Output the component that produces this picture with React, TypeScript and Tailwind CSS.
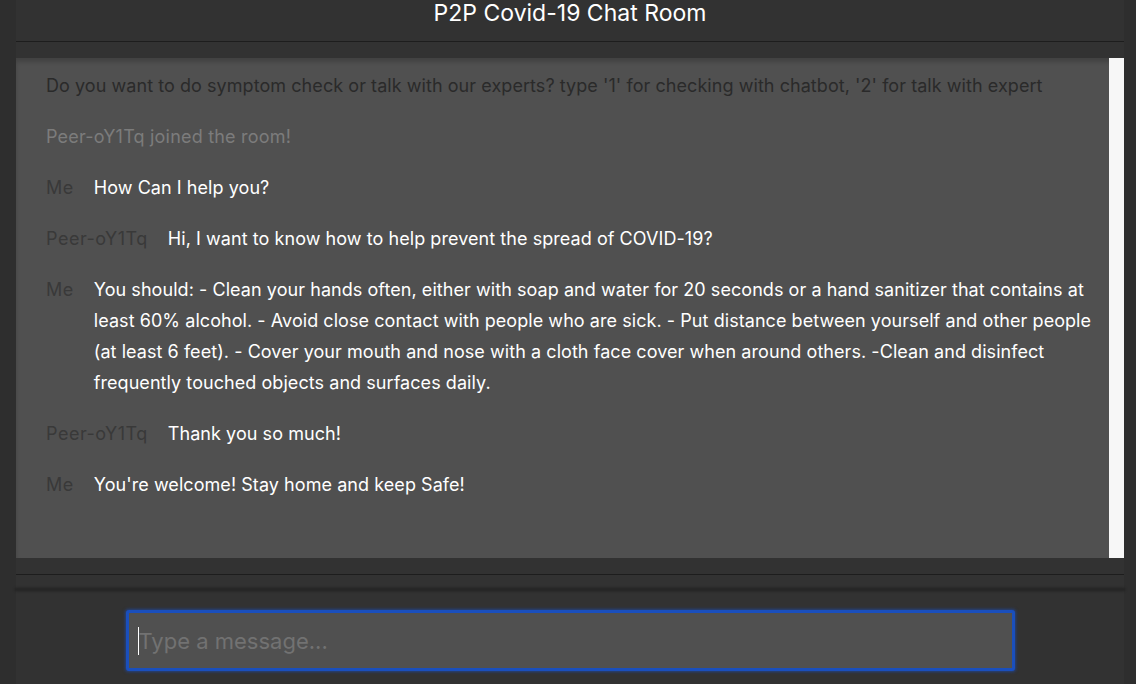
import { useState } from "react";

type Msg = { from?: string; text: string; kind: "system" | "notice" | "chat" };

const messages: Msg[] = [
  {
    kind: "system",
    text: "Do you want to do symptom check or talk with our experts? type '1' for checking with chatbot, '2' for talk with expert",
  },
  { kind: "notice", text: "Peer-oY1Tq joined the room!" },
  { kind: "chat", from: "Me", text: "How Can I help you?" },
  { kind: "chat", from: "Peer-oY1Tq", text: "Hi, I want to know how to help prevent the spread of COVID-19?" },
  {
    kind: "chat",
    from: "Me",
    text: "You should: - Clean your hands often, either with soap and water for 20 seconds or a hand sanitizer that contains at least 60% alcohol. - Avoid close contact with people who are sick. - Put distance between yourself and other people (at least 6 feet). - Cover your mouth and nose with a cloth face cover when around others. -Clean and disinfect frequently touched objects and surfaces daily.",
  },
  { kind: "chat", from: "Peer-oY1Tq", text: "Thank you so much!" },
  { kind: "chat", from: "Me", text: "You're welcome! Stay home and keep Safe!" },
];

function MessageRow({ msg }: { msg: Msg }) {
  if (msg.kind === "system") return <p className="text-[#2a2a2a]">{msg.text}</p>;
  if (msg.kind === "notice") return <p className="text-[#7c7c7c] tracking-[0.2px]">{msg.text}</p>;
  return (
    <div className="flex gap-[20px]">
      <span className="shrink-0 text-[#393939] tracking-[0.5px]">{msg.from}</span>
      <span className="text-white">{msg.text}</span>
    </div>
  );
}

export default function App() {
  const [draft, setDraft] = useState("");

  return (
    <div className="h-[684px] w-full bg-[#2e2e2e] font-['Inter',sans-serif] overflow-hidden">
      <div className="mx-[16px] mr-[12px] h-full bg-[#323232] flex flex-col">
        <header className="h-[42px] shrink-0 border-b border-[#1d1d1d] text-center">
          <h1 className="text-[23px] leading-[26px] text-white">P2P Covid-19 Chat Room</h1>
        </header>

        <div className="mt-[16px] h-[500px] shrink-0 flex bg-[#505050] shadow-[inset_0_4px_4px_rgba(0,0,0,0.18)]">
          <div className="flex-1 flex flex-col gap-[20px] pl-[30px] pr-[14px] pt-[12px] text-[18px] leading-[31px] tracking-[0.06px]">
            {messages.map((m, i) => (
              <MessageRow key={i} msg={m} />
            ))}
          </div>
          <div className="w-[15px] bg-[#f7f7f7]" />
        </div>

        <div className="mt-[16px] border-t border-[#1d1d1d]" />
        <div className="mt-[14px] h-[1px] bg-[#262626] shadow-[0_0_3px_1px_rgba(0,0,0,0.35)]" />

        <div className="flex justify-center pt-[20px]">
          <div className="relative w-[889px] h-[61px] rounded-[3px] border-[3px] border-[#1a4fbd] shadow-[0_0_3px_1px_rgba(26,79,189,0.6)] bg-[#505050]">
            <input
              value={draft}
              onChange={(e) => setDraft(e.target.value)}
              placeholder="Type a message..."
              className="w-full h-full bg-transparent pl-[10px] text-[22px] text-white placeholder:text-[#727272] outline-none"
            />
            <span className="absolute left-[9px] top-[14px] h-[28px] w-px bg-white" />
          </div>
        </div>
      </div>
    </div>
  );
}
